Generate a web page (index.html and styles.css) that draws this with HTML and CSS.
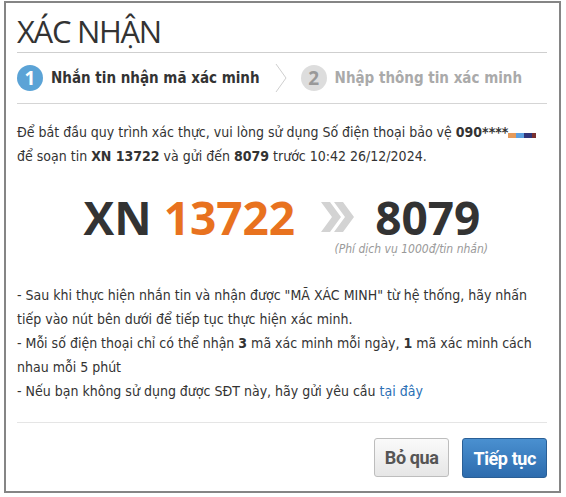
FILE: index.html
```html
<!DOCTYPE html>
<html lang="vi">
<head>
    <meta charset="UTF-8">
    <meta name="viewport" content="width=device-width, initial-scale=1.0">
    <title>Xác nhận</title>
    <link rel="stylesheet" href="styles.css">
</head>
<body>
    <div class="dialog">
        <h1 class="dialog-title">XÁC NHẬN</h1>

        <div class="steps">
            <div class="step active">
                <span class="step-num">1</span>
                <span class="step-label">Nhắn tin nhận mã xác minh</span>
            </div>
            <svg class="step-arrow" width="12" height="30" viewBox="0 0 12 30">
                <polyline points="1,1 11,15 1,29" fill="none" stroke="#cfcfcf" stroke-width="1"/>
            </svg>
            <div class="step">
                <span class="step-num">2</span>
                <span class="step-label">Nhập thông tin xác minh</span>
            </div>
        </div>

        <p class="intro">
            Để bắt đầu quy trình xác thực, vui lòng sử dụng Số điện thoại bảo vệ <b>090****</b><span class="phone-mask"><i class="m1"></i><i class="m2"></i><i class="m3"></i><i class="m4"></i></span>
            để soạn tin <b>XN 13722</b> và gửi đến <b>8079</b> trước 10:42 26/12/2024.
        </p>

        <div class="sms">
            <div class="sms-line">
                <span class="sms-code">XN <em>13722</em></span>
                <svg class="sms-arrow" width="34" height="30" viewBox="0 0 34 30">
                    <polygon points="0,0 9,0 20,15 9,30 0,30 11,15" fill="#d3d3d3"/>
                    <polygon points="13,0 22,0 33,15 22,30 13,30 24,15" fill="#d3d3d3"/>
                </svg>
                <span class="sms-to">8079</span>
            </div>
            <div class="sms-fee">(Phí dịch vụ 1000đ/tin nhắn)</div>
        </div>

        <div class="notes">
            <p>- Sau khi thực hiện nhắn tin và nhận được "MÃ XÁC MINH" từ hệ thống, hãy nhấn tiếp vào nút bên dưới để tiếp tục thực hiện xác minh.</p>
            <p>- Mỗi số điện thoại chỉ có thể nhận <b>3</b> mã xác minh mỗi ngày, <b>1</b> mã xác minh cách nhau mỗi 5 phút</p>
            <p>- Nếu bạn không sử dụng được SĐT này, hãy gửi yêu cầu <a href="#">tại đây</a></p>
        </div>

        <div class="dialog-footer">
            <button class="btn btn-default">Bỏ qua</button>
            <button class="btn btn-primary">Tiếp tục</button>
        </div>
    </div>
</body>
</html>
```

FILE: styles.css
```css
body {
    margin: 0;
    padding: 0;
    background-color: #fff;
    font-family: "DejaVu Sans Condensed", "DejaVu Sans", sans-serif;
    color: #333;
}
.dialog {
    margin: 1px 5px 0 4px;
    border: 2px solid #858585;
    padding: 0 12px 0 11px;
    height: 492px;
    box-sizing: border-box;
}
.dialog-title {
    font-family: "Open Sans", sans-serif;
    font-weight: 400;
    font-size: 31px;
    letter-spacing: -1.3px;
    line-height: 40px;
    margin: 0;
    padding: 8px 0 1px;
    color: #333;
    border-bottom: 1px solid #cfcfcf;
}
.steps {
    display: flex;
    align-items: center;
    height: 50px;
    border-bottom: 1px solid #d5d5d5;
}
.step {
    display: flex;
    align-items: center;
    font-weight: bold;
    font-size: 15px;
    color: #aaa;
}
.step-num {
    width: 26px;
    height: 26px;
    border-radius: 50%;
    background-color: #ddd;
    color: #999;
    font-family: "Open Sans", sans-serif;
    font-size: 19px;
    line-height: 26px;
    text-align: center;
    margin-right: 8px;
}
.step.active {
    color: #333;
}
.step.active .step-num {
    background-color: #5ba3d6;
    color: #fff;
}
.step-arrow {
    margin: 0 14px 0 15px;
}
.intro {
    margin: 16px 0 0;
    font-size: 14px;
    line-height: 24px;
}
.phone-mask {
    display: inline-flex;
    height: 5px;
    vertical-align: -1px;
}
.phone-mask i { display: block; height: 5px; width: 8px; }
.phone-mask .m1 { background: #e59a5a; }
.phone-mask .m2 { background: #5b9fe0; }
.phone-mask .m3 { background: #30357a; }
.phone-mask .m4 { background: #7a3030; width: 4px; }
.sms {
    margin-top: 24px;
    text-align: center;
}
.sms-line {
    display: flex;
    justify-content: center;
    align-items: center;
    font-family: "Open Sans", sans-serif;
    font-weight: bold;
    font-size: 46px;
    line-height: 50px;
    color: #333;
}
.sms-code em {
    font-style: normal;
    color: #e8721f;
}
.sms-arrow {
    margin: 0 20px 0 26px;
}
.sms-fee {
    font-style: italic;
    font-size: 12px;
    line-height: 14px;
    color: #999;
    text-align: right;
    padding-right: 59px;
}
.notes {
    margin-top: 27px;
    font-size: 14px;
    line-height: 24px;
}
.notes p {
    margin: 0;
}
.notes a {
    color: #2a6fb5;
    text-decoration: none;
}
.dialog-footer {
    margin-top: 19px;
    border-top: 1px solid #e5e5e5;
    padding-top: 15px;
    display: flex;
    justify-content: flex-end;
    gap: 13px;
}
.btn {
    font-family: "Roboto", sans-serif;
    font-weight: bold;
    font-size: 18px;
    letter-spacing: -0.4px;
    height: 40px;
    padding: 0 10px;
    border-radius: 3px;
    cursor: pointer;
}
.btn-default {
    background: linear-gradient(#fafafa, #e6e6e6);
    border: 1px solid #bdbdbd;
    color: #555;
    height: 39px;
}
.btn-primary {
    background: linear-gradient(#4a90d0, #2d6cae);
    border: 1px solid #2a5f96;
    color: #fff;
}
```
